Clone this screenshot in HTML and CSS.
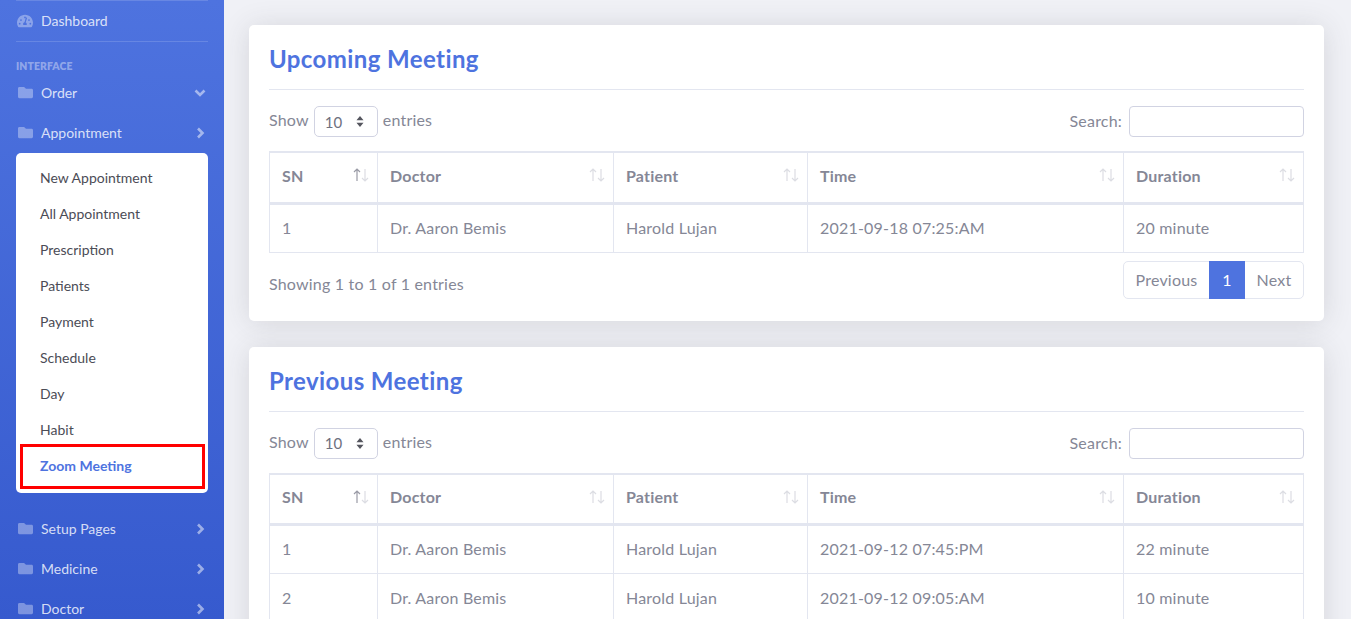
FILE: index.html
```html
<!DOCTYPE html>
<html lang="en">
<head>
    <meta charset="UTF-8">
    <title>Zoom Meeting</title>
    <link rel="stylesheet" href="styles.css">
</head>
<body>
    <div class="wrapper">
        <ul class="sidebar">
            <li class="nav-item first">
                <svg class="nav-icon gauge" viewBox="0 0 576 512"><path d="M288 32C129 32 0 161 0 320c0 53 14 102 39 144 6 10 16 16 28 16h442c12 0 22-6 28-16 25-42 39-91 39-144C576 161 447 32 288 32zm0 64c18 0 32 14 32 32s-14 32-32 32-32-14-32-32 14-32 32-32zM96 384c-18 0-32-14-32-32s14-32 32-32 32 14 32 32-14 32-32 32zm48-128c-18 0-32-14-32-32s14-32 32-32 32 14 32 32-14 32-32 32zm203 146H229c-6-10-10-21-10-34 0-32 22-59 52-66l46-156c3-12 15-19 27-15 12 3 19 15 15 27l-46 153c22 12 40 32 40 57 0 13-3 24-6 34zm85-146c-18 0-32-14-32-32s14-32 32-32 32 14 32 32-14 32-32 32zm48 128c-18 0-32-14-32-32s14-32 32-32 32 14 32 32-14 32-32 32z"/></svg>
                <span>Dashboard</span>
            </li>
            <li class="divider"></li>
            <li class="heading">INTERFACE</li>
            <li class="nav-item">
                <svg class="nav-icon" viewBox="0 0 512 512"><path d="M464 128H272l-64-64H48C21 64 0 85 0 112v288c0 27 21 48 48 48h416c27 0 48-21 48-48V176c0-27-21-48-48-48z"/></svg>
                <span>Order</span>
                <svg class="chevron" viewBox="0 0 14 14"><path d="M2.500 4.500L7 9l4.500-4.500"/></svg>
            </li>
            <li class="nav-item">
                <svg class="nav-icon" viewBox="0 0 512 512"><path d="M464 128H272l-64-64H48C21 64 0 85 0 112v288c0 27 21 48 48 48h416c27 0 48-21 48-48V176c0-27-21-48-48-48z"/></svg>
                <span>Appointment</span>
                <svg class="chevron" viewBox="0 0 14 14"><path d="M5 2.500L9.500 7 5 11.500"/></svg>
            </li>
            <li class="submenu">
                <a>New Appointment</a>
                <a>All Appointment</a>
                <a>Prescription</a>
                <a>Patients</a>
                <a>Payment</a>
                <a>Schedule</a>
                <a>Day</a>
                <a>Habit</a>
                <a class="active">Zoom Meeting</a>
            </li>
            <li class="nav-item">
                <svg class="nav-icon" viewBox="0 0 512 512"><path d="M464 128H272l-64-64H48C21 64 0 85 0 112v288c0 27 21 48 48 48h416c27 0 48-21 48-48V176c0-27-21-48-48-48z"/></svg>
                <span>Setup Pages</span>
                <svg class="chevron" viewBox="0 0 14 14"><path d="M5 2.500L9.500 7 5 11.500"/></svg>
            </li>
            <li class="nav-item">
                <svg class="nav-icon" viewBox="0 0 512 512"><path d="M464 128H272l-64-64H48C21 64 0 85 0 112v288c0 27 21 48 48 48h416c27 0 48-21 48-48V176c0-27-21-48-48-48z"/></svg>
                <span>Medicine</span>
                <svg class="chevron" viewBox="0 0 14 14"><path d="M5 2.500L9.500 7 5 11.500"/></svg>
            </li>
            <li class="nav-item">
                <svg class="nav-icon" viewBox="0 0 512 512"><path d="M464 128H272l-64-64H48C21 64 0 85 0 112v288c0 27 21 48 48 48h416c27 0 48-21 48-48V176c0-27-21-48-48-48z"/></svg>
                <span>Doctor</span>
                <svg class="chevron" viewBox="0 0 14 14"><path d="M5 2.500L9.500 7 5 11.500"/></svg>
            </li>
        </ul>

        <div class="content">
            <div class="card">
                <h2 class="card-title">Upcoming Meeting</h2>
                <div class="table-top">
                    <div class="show">
                        <span>Show</span>
                        <div class="select">10
                            <svg viewBox="0 0 10 14"><path d="M5 0l4.500 5.500h-9zM5 14l-4.500-5.500h9z"/></svg>
                        </div>
                        <span>entries</span>
                    </div>
                    <label class="search">Search: <input type="text"></label>
                </div>
                <table>
                    <thead>
                        <tr>
                            <th class="c1 sorted">SN<svg class="sort" viewBox="0 0 16 14"><path class="up" d="M4 13V1M1 4l3-3 3 3"/><path d="M12 1v12M9 10l3 3 3-3"/></svg></th>
                            <th class="c2">Doctor<svg class="sort" viewBox="0 0 16 14"><path class="up" d="M4 13V1M1 4l3-3 3 3"/><path d="M12 1v12M9 10l3 3 3-3"/></svg></th>
                            <th class="c3">Patient<svg class="sort" viewBox="0 0 16 14"><path class="up" d="M4 13V1M1 4l3-3 3 3"/><path d="M12 1v12M9 10l3 3 3-3"/></svg></th>
                            <th class="c4">Time<svg class="sort" viewBox="0 0 16 14"><path class="up" d="M4 13V1M1 4l3-3 3 3"/><path d="M12 1v12M9 10l3 3 3-3"/></svg></th>
                            <th class="c5">Duration<svg class="sort" viewBox="0 0 16 14"><path class="up" d="M4 13V1M1 4l3-3 3 3"/><path d="M12 1v12M9 10l3 3 3-3"/></svg></th>
                        </tr>
                    </thead>
                    <tbody>
                        <tr>
                            <td>1</td>
                            <td>Dr. Aaron Bemis</td>
                            <td>Harold Lujan</td>
                            <td>2021-09-18 07:25:AM</td>
                            <td>20 minute</td>
                        </tr>
                    </tbody>
                </table>
                <div class="table-bottom">
                    <div class="info">Showing 1 to 1 of 1 entries</div>
                    <div class="pagination">
                        <a class="prev">Previous</a>
                        <a class="current">1</a>
                        <a class="next">Next</a>
                    </div>
                </div>
            </div>

            <div class="card">
                <h2 class="card-title">Previous Meeting</h2>
                <div class="table-top">
                    <div class="show">
                        <span>Show</span>
                        <div class="select">10
                            <svg viewBox="0 0 10 14"><path d="M5 0l4.500 5.500h-9zM5 14l-4.500-5.500h9z"/></svg>
                        </div>
                        <span>entries</span>
                    </div>
                    <label class="search">Search: <input type="text"></label>
                </div>
                <table>
                    <thead>
                        <tr>
                            <th class="c1 sorted">SN<svg class="sort" viewBox="0 0 16 14"><path class="up" d="M4 13V1M1 4l3-3 3 3"/><path d="M12 1v12M9 10l3 3 3-3"/></svg></th>
                            <th class="c2">Doctor<svg class="sort" viewBox="0 0 16 14"><path class="up" d="M4 13V1M1 4l3-3 3 3"/><path d="M12 1v12M9 10l3 3 3-3"/></svg></th>
                            <th class="c3">Patient<svg class="sort" viewBox="0 0 16 14"><path class="up" d="M4 13V1M1 4l3-3 3 3"/><path d="M12 1v12M9 10l3 3 3-3"/></svg></th>
                            <th class="c4">Time<svg class="sort" viewBox="0 0 16 14"><path class="up" d="M4 13V1M1 4l3-3 3 3"/><path d="M12 1v12M9 10l3 3 3-3"/></svg></th>
                            <th class="c5">Duration<svg class="sort" viewBox="0 0 16 14"><path class="up" d="M4 13V1M1 4l3-3 3 3"/><path d="M12 1v12M9 10l3 3 3-3"/></svg></th>
                        </tr>
                    </thead>
                    <tbody>
                        <tr>
                            <td>1</td>
                            <td>Dr. Aaron Bemis</td>
                            <td>Harold Lujan</td>
                            <td>2021-09-12 07:45:PM</td>
                            <td>22 minute</td>
                        </tr>
                        <tr>
                            <td>2</td>
                            <td>Dr. Aaron Bemis</td>
                            <td>Harold Lujan</td>
                            <td>2021-09-12 09:05:AM</td>
                            <td>10 minute</td>
                        </tr>
                    </tbody>
                </table>
            </div>
        </div>
    </div>
</body>
</html>
```

FILE: styles.css
```css
*, *::after {
    box-sizing: border-box;
}
html, body {
    height: 619px;
    overflow: hidden;
}
body {
    margin: 0;
    font-family: "Lato", "Open Sans", sans-serif;
    font-size: 16px;
    color: #858796;
    background: #f0f1f6;
}
.wrapper {
    display: flex;
    height: 619px;
    overflow: hidden;
}

/* sidebar */
.sidebar {
    width: 224px;
    height: 619px;
    flex-shrink: 0;
    margin: 0;
    padding: 0 16px;
    list-style: none;
    background: linear-gradient(180deg, #4e73df 0%, #365ace 100%);
    overflow: hidden;
}
.nav-item {
    display: flex;
    align-items: center;
    height: 40px;
    color: rgba(255, 255, 255, 0.8);
    font-size: 14px;
}
.nav-item span {
    margin-bottom: 2px;
}
.nav-item.first {
    height: 41px;
    border-top: 1px solid rgba(255, 255, 255, 0.15);
}
.nav-icon {
    width: 15px;
    height: 15px;
    margin: 0 8px 1px 2px;
    fill: rgba(255, 255, 255, 0.35);
}
.nav-icon.gauge {
    width: 16px;
    height: 16px;
    margin: 0 8px 0 1px;
}
.chevron {
    height: 14px;
    width: 14px;
    margin-left: auto;
    margin-right: 1px;
    fill: none;
    stroke: rgba(255, 255, 255, 0.5);
    stroke-width: 2.600;
}
.divider {
    border-top: 1px solid rgba(255, 255, 255, 0.15);
}
.heading {
    height: 31px;
    padding-top: 18px;
    font-size: 10.4px;
    line-height: 12px;
    font-weight: 800;
    letter-spacing: 0.1px;
    color: rgba(255, 255, 255, 0.4);
}
.submenu {
    display: flex;
    flex-direction: column;
    height: 340px;
    margin-bottom: 16px;
    padding: 7px 4px 0;
    background: #fff;
    border-radius: 5px;
}
.submenu a {
    position: relative;
    height: 36px;
    padding: 0 20px;
    line-height: 36px;
    font-size: 14px;
    color: #4b4c56;
}
.submenu a.active {
    color: #4e73df;
    font-weight: 700;
}
.submenu a.active::after {
    content: "";
    position: absolute;
    top: -4px;
    left: 0;
    right: -1px;
    height: 45px;
    border: 3px solid #f00;
}

/* main column */
.content {
    flex: 1;
    display: flex;
    flex-direction: column;
    gap: 26px;
    padding: 25px 27px 0 25px;
    min-width: 0;
    letter-spacing: 0.2px;
}
.card {
    flex-shrink: 0;
    padding: 20px 20px 22px;
    background: #fff;
    border-radius: 5px;
    box-shadow: 0 2px 28px 0 rgba(58, 59, 69, 0.15);
}
.card-title {
    height: 45px;
    margin: 0 0 16px;
    padding-bottom: 10px;
    border-bottom: 1px solid #e3e6f0;
    font-size: 24px;
    line-height: 28px;
    font-weight: 700;
    letter-spacing: 0.4px;
    color: #4e73df;
}
.table-top {
    display: flex;
    justify-content: space-between;
    align-items: center;
    height: 31px;
    margin-bottom: 14px;
}
.show {
    display: flex;
    align-items: center;
    gap: 5px;
}
.show span {
    margin-bottom: 4px;
}
.select {
    display: flex;
    align-items: center;
    justify-content: space-between;
    width: 64px;
    height: 31px;
    padding: 0 13px 0 10px;
    border: 1px solid #d1d3e2;
    border-radius: 5px;
    color: #6e707e;
    font-size: 15px;
    letter-spacing: 0;
}
.select svg {
    width: 8px;
    height: 11px;
    fill: #55565f;
}
.search {
    display: flex;
    align-items: flex-start;
    gap: 7px;
    line-height: 29px;
}
.search input {
    width: 175px;
    height: 31px;
    border: 1px solid #d1d3e2;
    border-radius: 4px;
}
table {
    width: 1035px;
    table-layout: fixed;
    border-collapse: collapse;
    border: 1px solid #e3e6f0;
}
th, td {
    border: 1px solid #e3e6f0;
    padding: 12px 12px 14px;
    text-align: left;
    height: 49px;
}
thead th {
    position: relative;
    height: 51px;
    padding-bottom: 16px;
    border-top-width: 2px;
    border-bottom-width: 3px;
    font-weight: 700;
}
.c1 { width: 108px; }
.c2 { width: 236px; }
.c3 { width: 194px; }
.c4 { width: 316px; }
.c5 { width: 180px; }
.sort {
    position: absolute;
    top: 15px;
    right: 8px;
    width: 16px;
    height: 14px;
    fill: none;
    stroke: #dcdde3;
    stroke-width: 1.200;
}
.sorted .sort .up {
    stroke: #9a9ba6;
}
.table-bottom {
    display: flex;
    justify-content: space-between;
    align-items: flex-start;
    margin-top: 8px;
}
.info {
    padding-top: 13px;
}
.pagination {
    display: flex;
    width: 181px;
    height: 38px;
    border: 1px solid #e3e6f0;
    border-radius: 5px;
    text-align: center;
}
.pagination a {
    line-height: 35px;
}
.pagination a.prev {
    width: 85px;
}
.pagination a.next {
    flex: 1;
}
.pagination a.current {
    width: 36px;
    margin: -1px 0;
    line-height: 37px;
    background: #4e73df;
    color: #fff;
}
```
